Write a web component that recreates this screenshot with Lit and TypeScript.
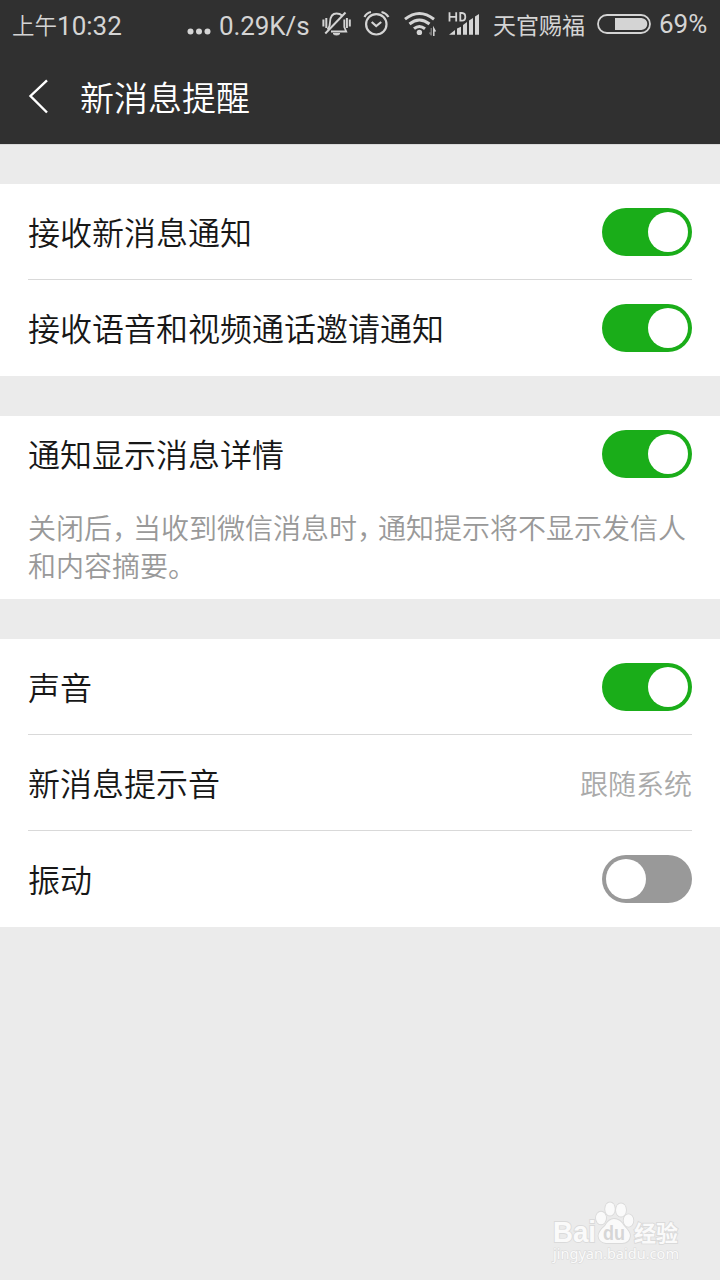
import { LitElement, html, css, svg } from "lit";
import { customElement, property } from "lit/decorators.js";
import { classMap } from "lit/directives/class-map.js";

@customElement("toggle-switch")
class ToggleSwitch extends LitElement {
  @property({ type: Boolean }) on = false;
  static styles = css`
    :host { display: block; flex: none; }
    .track { box-sizing: border-box; display: flex; width: 90px; height: 48px; padding: 4px; border-radius: 24px; background: #999; }
    .track.on { justify-content: flex-end; background: #1aad19; }
    .knob { width: 40px; height: 40px; border-radius: 50%; background: #fff; }
  `;
  render() {
    return html`<div class=${classMap({ track: true, on: this.on })} role="switch" aria-checked=${this.on ? "true" : "false"}
      @click=${() => (this.on = !this.on)}><div class="knob"></div></div>`;
  }
}

@customElement("status-bar")
class StatusBar extends LitElement {
  static styles = css`
    :host { display: flex; height: 50px; padding: 0 12px; align-items: center; color: #d4d4d4; box-sizing: border-box;
      font: 400 26px/52px Roboto, "Noto Sans CJK SC", sans-serif; white-space: nowrap; }
    .time, .carrier, .speed, .percent { height: 50px; }
    .time { display: flex; }
    .cjk { font: 350 22.5px/48px "Noto Sans CJK SC", sans-serif; }
    .grow { flex: 1; }
    .dots { margin-right: 8px; }
    .speed { width: 91px; margin-right: 11px; letter-spacing: -0.1px; }
    .carrier { font: 400 23px/49px "Noto Sans CJK SC", sans-serif; margin-right: 12px; }
    .percent { width: 49px; margin-left: 8px; line-height: 49px; }
    svg { display: block; flex: none; }
  `;
  render() {
    return html`
      <div class="time"><span class="cjk">上午</span><span>10:32</span></div>
      <div class="grow"></div>
      <svg class="dots" width="24" height="50" fill="#d4d4d4"><circle cx="3.5" cy="31.5" r="3"/><circle cx="12" cy="31.5" r="3"/><circle cx="20.5" cy="31.5" r="3"/></svg>
      <div class="speed">0.29K/s</div>
      <svg width="172" height="50" viewBox="321 0 172 50" fill="none" stroke="#d4d4d4" stroke-width="1.8">
        <path d="M327.5 29.5 Q330 27 330 22 Q330.5 13.5 336.5 13.5 Q340 13.5 342 15.5 M344.3 19.5 V27 L346.2 31.5 H331"/>
        <path d="M325.3 33.5 L345.5 12.5" stroke-width="2"/>
        <path d="M333 33.5 H340 Q339 35 336.5 35 Q334 35 333 33.5Z" fill="#d4d4d4" stroke-width="1"/>
        <path d="M323.4 19.5 V26.5 M326.3 18 V28 M346.9 18 V28 M349.8 19.5 V26.5" stroke-width="2"/>
        <circle cx="376.3" cy="24.3" r="10.2" stroke-width="2.2"/>
        <path d="M371.7 22 L376.2 26 L381.2 22" stroke-width="2.2"/>
        <path d="M364.5 17 Q366.5 13 371 12 M381.5 12 Q386 13 388.5 17" stroke-width="2.2"/>
        <g stroke-width="3"><path d="M405 19.2 Q419.3 7.8 434 19.2"/><path d="M409.5 24 Q419.3 16 429.5 24"/><path d="M414 28.7 Q419.3 24.2 425 28.7"/></g>
        <circle cx="419.4" cy="32.4" r="2.7" fill="#d4d4d4" stroke="none"/>
        <path d="M431.3 28 V35.5 M429.5 32.5 L431.3 35" stroke="#777" stroke-width="1.5"/>
        <path d="M433.8 36 V28.5 L435.5 31.5" stroke-width="1.5"/>
        <path d="M449.5 12.3 V21.5 M456.2 12.3 V21.5 M449.5 16.8 H456.2 M460.3 13 V20.7 H462 Q465.3 20.5 465.3 16.9 Q465.3 13.2 462 13Z" stroke-width="1.8"/>
        <path d="M449 34.8 L455 30 V34.8Z M457 28.5 L461 26.7 V34.8 H457Z M463 25 L467 22 V34.8 H463Z M469 20.5 L473 18 V34.8 H469Z M475 16.5 L479 14 V34.8 H475Z" fill="#d4d4d4" stroke="none"/>
      </svg>
      <div class="carrier">天官赐福</div>
      <svg width="54" height="50" viewBox="597 0 54 50">
        <rect x="598" y="15" width="52" height="18" rx="9" fill="none" stroke="#d4d4d4" stroke-width="1.8"/>
        <path d="M615 18 H641.5 Q647.3 19 647.3 24 Q647.3 29 641.5 30 H615Z" fill="#d4d4d4"/>
      </svg>
      <div class="percent">69%</div>
    `;
  }
}

@customElement("setting-row")
class SettingRow extends LitElement {
  @property() label = "";
  @property() value = "";
  @property({ type: Boolean }) divider = false;
  @property({ type: Boolean }) compact = false;
  @property({ type: Boolean }) on = false;
  static styles = css`
    :host { display: block; padding: 0 28px; }
    .row { display: flex; justify-content: space-between; align-items: center; height: 96px; }
    .row.compact { height: 76px; }
    .row.divider { background: linear-gradient(#d9d9d9, #d9d9d9) bottom / 100% 1px no-repeat; }
    .label { font-size: 32px; line-height: 48px; padding-bottom: 2px; color: #171717; }
    .value { font-size: 28px; line-height: 42px; color: #aaa; }
  `;
  render() {
    return html`<div class=${classMap({ row: true, divider: this.divider, compact: this.compact })}>
      <span class="label">${this.label}</span>
      ${this.value ? html`<span class="value">${this.value}</span>` : html`<toggle-switch ?on=${this.on}></toggle-switch>`}
    </div>`;
  }
}

@customElement("app-root")
class AppRoot extends LitElement {
  static styles = css`
    :host { display: block; position: relative; height: 1280px; overflow: hidden; background: #ebebeb;
      font-family: "Noto Sans CJK SC", sans-serif; font-weight: 350; }
    .top { height: 144px; background: #303030; }
    .header { display: flex; align-items: center; height: 94px; padding-left: 28px; color: #fff; }
    .back { display: block; margin-right: 32px; }
    .title { font-size: 34px; line-height: 50px; padding-bottom: 1px; }
    .content { display: flex; flex-direction: column; gap: 40px; padding-top: 39px; border-top: 1px solid #d9d9d9; }
    .group { background: #fff; }
    .note { padding: 17px 28px 15px; font-size: 28px; line-height: 37.5px; color: #999; white-space: nowrap; }
    .comma { letter-spacing: -7px; }
    .mark { position: absolute; right: 34px; bottom: 8px; }
    .brand { font: 700 29px "Liberation Sans", sans-serif; }
    .du { font: 700 21px "Liberation Sans", sans-serif; }
    .cn { font: 700 22px "Noto Sans CJK SC", sans-serif; }
    .url { font: 400 15px "Noto Sans", sans-serif; }
  `;
  render() {
    const toes = svg`<ellipse cx="601" cy="1218" rx="5" ry="6.3"/><ellipse cx="610" cy="1209" rx="4.8" ry="6.6"/><ellipse cx="621" cy="1210" rx="5" ry="6.6"/><ellipse cx="628.5" cy="1220.5" rx="4.8" ry="6.2"/>`;
    return html`
      <div class="top">
        <status-bar></status-bar>
        <div class="header">
          <svg class="back" width="20" height="36" fill="none" stroke="#fff" stroke-width="2.4"><path d="M19 1.3 L2.5 17 L19 33.5"/></svg>
          <span class="title">新消息提醒</span>
        </div>
      </div>
      <div class="content">
        <div class="group">
          <setting-row label="接收新消息通知" divider on></setting-row>
          <setting-row label="接收语音和视频通话邀请通知" on></setting-row>
        </div>
        <div class="group">
          <setting-row label="通知显示消息详情" compact on></setting-row>
          <div class="note">关闭后<span class="comma">，</span>当收到微信消息时<span class="comma">，</span>通知提示将不显示发信人<br>和内容摘要。</div>
        </div>
        <div class="group">
          <setting-row label="声音" divider on></setting-row>
          <setting-row label="新消息提示音" value="跟随系统" divider></setting-row>
          <setting-row label="振动"></setting-row>
        </div>
      </div>
      <svg class="mark" width="136" height="72" viewBox="550 1200 136 72" fill="#fafafa" stroke="#dadada" stroke-width="1.8" paint-order="stroke">
        <text class="brand" x="553" y="1242" textLength="43" lengthAdjust="spacingAndGlyphs">Bai</text>
        ${toes}
        <path d="M614 1219 Q620 1219 624 1226 Q630 1232 630 1236 Q629 1243 622 1243 H606 Q599 1242 598.5 1236 Q599 1231 605 1226 Q609 1219 614 1219Z"/>
        <text class="du" x="603" y="1240" textLength="22" lengthAdjust="spacingAndGlyphs" fill="#d6d6d6" stroke="none">du</text>
        <text class="cn" x="634" y="1240.5" textLength="44" lengthAdjust="spacingAndGlyphs">经验</text>
        <text class="url" x="553" y="1259" textLength="126" lengthAdjust="spacingAndGlyphs" stroke-width="1.2">jingyan.baidu.com</text>
      </svg>
    `;
  }
}
